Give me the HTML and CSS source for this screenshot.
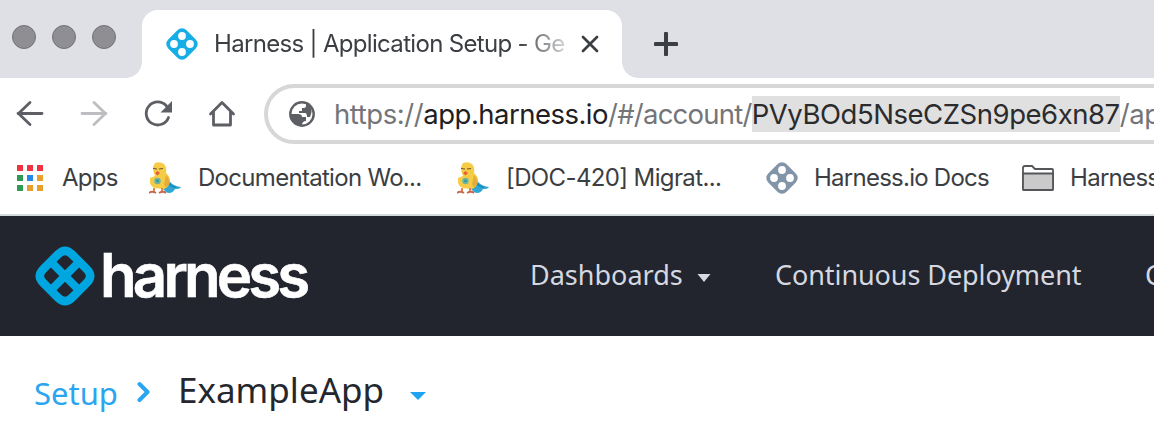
FILE: index.html
```html
<!DOCTYPE html>
<html lang="en">
<head>
<meta charset="utf-8">
<title>Harness | Application Setup</title>
<link rel="stylesheet" href="styles.css">
</head>
<body>
<svg class="defs" width="0" height="0" aria-hidden="true">
  <symbol id="mark" viewBox="0 0 32 32">
    <rect x="3" y="3" width="26" height="26" rx="6.500" transform="rotate(45 16 16)" fill="currentColor"/>
    <g fill="#fff"><circle cx="16" cy="8" r="3.900"/><circle cx="8" cy="16" r="3.900"/><circle cx="24" cy="16" r="3.900"/><circle cx="16" cy="24" r="3.900"/></g>
  </symbol>
  <symbol id="duck" viewBox="0 0 32 32">
    <path d="M18 15c2 5 6 9 14 10-1 2-4 2-6 2-2 4-6 5-9 3l-3-3z" fill="#31a5d3"/>
    <path d="M20 20c1 4 5 5 7 5" fill="none" stroke="#168bbb" stroke-width="1.5"/>
    <path d="M6 1Q11-1 15 2Q18 5 17 11Q21 14 21 19Q20 26 14 27L6 26Q1 24 1 20V16L6 14Q4 10 4 5Z" fill="#f6cc46"/>
    <path d="M17 13c4 4 5 9 0 13l-2-4z" fill="#e5ad38"/>
    <path d="M4 6.500l4 .5M10 7l4-.5" stroke="#71552b" stroke-width="1.2"/>
    <path d="M6 11l2.500-2 2.500 2-2.500 2.500z" fill="#e95f35"/>
    <circle cx="8.500" cy="19" r="3.300" fill="#72b59c"/><circle cx="8.500" cy="19" r="1.400" fill="#2b9aa3"/>
    <path d="M5 26v4M13 26v4" stroke="#e48745" stroke-width="2"/><path d="M0 31q3-2.500 7 0M10 31q4-2.500 7 0" fill="none" stroke="#c96852" stroke-width="1.8"/>
  </symbol>
</svg>

<div class="tabstrip">
  <div class="lights"><i></i><i></i><i></i></div>
  <div class="tab">
    <svg class="favicon blue"><use href="#mark"/></svg>
    <span class="tab-title">Harness | Application Setup - Ge</span>
    <svg class="close" viewBox="0 0 18 18"><path d="M2 2l14 14M16 2L2 16"/></svg>
  </div>
  <svg class="plus" viewBox="0 0 24 24"><path d="M12 1.500v21M1.500 12h21"/></svg>
</div>

<div class="toolbar">
  <svg class="tool" viewBox="0 0 32 32"><path d="M28 15.500H4M16 4.500L4.500 15.500 16 26.500"/></svg>
  <svg class="tool faded" viewBox="0 0 32 32"><path d="M4 15.500h24M16 4.500l11.500 11L16 26.500"/></svg>
  <svg class="tool" viewBox="0 0 32 32"><path d="M26.500 19.500A11.500 11.500 0 1 1 24.500 8"/><path class="solid" d="M30 3v11.500H18.500z"/></svg>
  <svg class="tool" viewBox="0 0 32 32"><path d="M4.500 16L16 4.500 27.500 16M7.500 14v13h17V14"/></svg>
  <div class="address">
    <svg class="globe" viewBox="0 0 26 26"><circle cx="13" cy="13" r="11.700"/><path d="M1 13h8q4 0 4 3h4v4q-4 0-4 4.500Q4 25 1 13zM13 1q3 0 4 2v2q0 2-3 2h-1v3h-3v2h6q2 0 2 4h3q5-12-5-15z"/></svg>
    <div class="url"><span>https://</span><b>app.harness.io</b><span class="path">/#/account/</span><mark>PVyBOd5NseCZSn9pe6xn87</mark><span>/app</span></div>
  </div>
</div>

<div class="bookmarks">
  <div class="apps"><i class="r"></i><i class="r"></i><i class="r"></i><i class="g"></i><i class="b"></i><i class="o"></i><i class="g"></i><i class="o"></i><i class="o"></i></div>
  <span class="bm bm-apps">Apps</span>
  <svg class="favicon"><use href="#duck"/></svg>
  <span class="bm bm-doc">Documentation Wo...</span>
  <svg class="favicon"><use href="#duck"/></svg>
  <span class="bm bm-migrate">[DOC-420] Migrat...</span>
  <svg class="favicon slate"><use href="#mark"/></svg>
  <span class="bm bm-harness">Harness.io Docs</span>
  <svg class="folder" viewBox="0 0 32 26"><path class="back" d="M1 24V3q0-2 2-2h7l3 3h17q1 0 1 1v19q0 1-1 1H2q-1 0-1-1z"/><path class="front" d="M1 8.500h30V24q0 1-1 1H2q-1 0-1-1z"/></svg>
  <span class="bm bm-last">Harness</span>
</div>

<header class="header">
  <svg class="logo" viewBox="0 0 60 60">
    <g transform="rotate(45 30 30)">
      <path fill-rule="evenodd" fill="#00a6df" d="M20 5.500H40Q54.500 5.500 54.500 20V40Q54.500 54.500 40 54.500H20Q5.500 54.500 5.500 40V20Q5.500 5.500 20 5.500ZM19 14Q14 14 14 19V26H26V14ZM34 14V26H46V19Q46 14 41 14ZM14 34V41Q14 46 19 46H26V34ZM34 34V46H41Q46 46 46 41V34Z"/>
    </g>
  </svg>
  <span class="brand">harness</span>
  <nav class="nav">
    <span class="dash">Dashboards</span><svg class="caret" viewBox="0 0 14 8"><path d="M.5 0h13L7 8z"/></svg>
    <span class="deploy">Continuous Deployment</span>
    <span class="more">Continuous</span>
  </nav>
</header>

<main class="crumbs">
  <span class="setup">Setup</span>
  <svg class="chevron" viewBox="0 0 14 22"><path d="M2.500 3l8 8-8 8"/></svg>
  <span class="app">ExampleApp</span>
  <svg class="app-caret" viewBox="0 0 16 8"><path d="M0 0h16L8 8z"/></svg>
</main>
</body>
</html>
```

FILE: styles.css
```css
* { box-sizing: border-box; }
html { overflow: hidden; }
body { margin: 0; width: 1154px; height: 446px; overflow: hidden; background: #fff; font-family: Inter, sans-serif; color: #3b3e42; white-space: nowrap; }
svg { display: block; flex: none; }
.defs { position: absolute; }
span { flex: none; }

.tabstrip { display: flex; height: 78px; background: #dee0e6; }
.lights { display: flex; gap: 16px; width: 142px; padding: 25px 0 0 12px; }
.lights i { width: 24px; height: 24px; border-radius: 50%; background: #8f8e93; border: 1px solid #737277; }
.tab { position: relative; display: flex; align-items: center; width: 480px; height: 68px; margin-top: 10px; padding-left: 24px; border-radius: 16px 16px 0 0; background: #fff; }
.tab::before, .tab::after { content: ""; position: absolute; bottom: 0; width: 16px; height: 16px; }
.tab::before { left: -16px; background: radial-gradient(circle at 0 0, transparent 15.500px, #fff 16px); }
.tab::after { right: -16px; background: radial-gradient(circle at 100% 0, transparent 15.500px, #fff 16px); }
.favicon { width: 32px; height: 32px; }
.blue { color: #16aee5; }
.slate { color: #8295a8; }
.tab-title { width: 352px; margin-left: 16px; font-size: 24px; line-height: 32px; letter-spacing: -0.68px; -webkit-mask-image: linear-gradient(90deg, #000 305px, transparent 364px); mask-image: linear-gradient(90deg, #000 305px, transparent 364px); }
.close { width: 18px; height: 18px; margin-left: 15px; fill: none; stroke: #3b3e42; stroke-width: 2.700; stroke-linecap: round; }
.plus { width: 24px; height: 24px; margin: 32px 0 0 32px; fill: none; stroke: #3b3e42; stroke-width: 4; stroke-linecap: round; }

.toolbar { display: flex; height: 72px; padding: 6px 0 0 14px; overflow: hidden; }
.tool { width: 32px; height: 32px; margin: 14px 32px 0 0; fill: none; stroke: #5d5f64; stroke-width: 2.800; stroke-linecap: round; stroke-linejoin: round; }
.tool .solid { fill: #5d5f64; stroke: none; }
.faded { stroke: #bdbec1; }
.address { display: flex; align-items: center; flex: none; width: 920px; height: 60px; margin-left: -6px; padding-left: 21px; border: 4px solid #d7d7d7; border-radius: 30px; }
.globe { width: 26px; height: 26px; }
.globe circle { fill: none; stroke: #5d5f64; stroke-width: 2.400; }
.globe path { fill: #5d5f64; }
.url { display: flex; margin-left: 19px; font-size: 27.500px; line-height: 36px; letter-spacing: -0.42px; color: #747578; }
.url b { font-weight: 400; letter-spacing: -0.52px; color: #1f2023; }
.url .path { letter-spacing: -0.75px; }
.url mark { background: #e0e0e0; color: #2b2b2d; letter-spacing: -0.46px; }

.bookmarks { display: flex; align-items: center; height: 66px; padding: 0 0 8px 17px; border-bottom: 2px solid #d5dadd; font-size: 24px; line-height: 32px; overflow: hidden; }
.apps { display: grid; grid-template-columns: repeat(3, 6px); gap: 4px; width: 45px; flex: none; }
.apps i { height: 6px; }
.r { background: #ef3340; } .g { background: #2e9b55; } .b { background: #2587eb; } .o { background: #e8a02c; }
.bm { letter-spacing: -0.7px; }
.bm-apps { width: 87px; }
.bm-doc { width: 259px; margin-left: 17px; }
.bm-migrate { width: 260px; margin-left: 17px; letter-spacing: -0.62px; }
.bm-harness { width: 208px; margin-left: 16px; letter-spacing: -0.75px; }
.folder { width: 32px; height: 26px; }
.folder path { stroke: #55565a; stroke-width: 1.800; }
.back { fill: #fff; } .front { fill: #cacaca; }
.bm-last { margin-left: 16px; }

.header { display: flex; height: 120px; padding-left: 35px; background: #22252d; overflow: hidden; }
.logo { width: 60px; height: 60px; margin-top: 30px; }
.brand { flex: none; width: 435px; padding: 23px 0 0 5px; font-size: 60px; line-height: 72px; font-weight: 600; letter-spacing: -3.900px; color: #fff; -webkit-text-stroke: 0.6px #fff; }
.nav { display: flex; height: 116px; align-items: center; font-family: "Noto Sans", sans-serif; font-size: 27px; color: #d5d8e1; }
.dash { width: 167px; }
.caret { width: 14px; height: 8px; margin-top: 7px; fill: #d5d8e1; }
.deploy { width: 370px; margin-left: 64px; letter-spacing: -0.08px; }

.crumbs { display: flex; height: 110px; padding-left: 34px; font-family: "Noto Sans", sans-serif; }
.setup { width: 103px; margin-top: 36px; font-size: 31px; line-height: 42px; color: #2aa5ef; }
.chevron { width: 14px; height: 22px; margin-top: 45px; fill: none; stroke: #2aa5ef; stroke-width: 4; stroke-linecap: round; stroke-linejoin: round; }
.app { width: 232px; margin: 29px 0 0 27px; font-size: 35px; line-height: 50px; color: #25272e; }
.app-caret { width: 16px; height: 8px; margin-top: 56px; fill: #20a3f3; }
```
